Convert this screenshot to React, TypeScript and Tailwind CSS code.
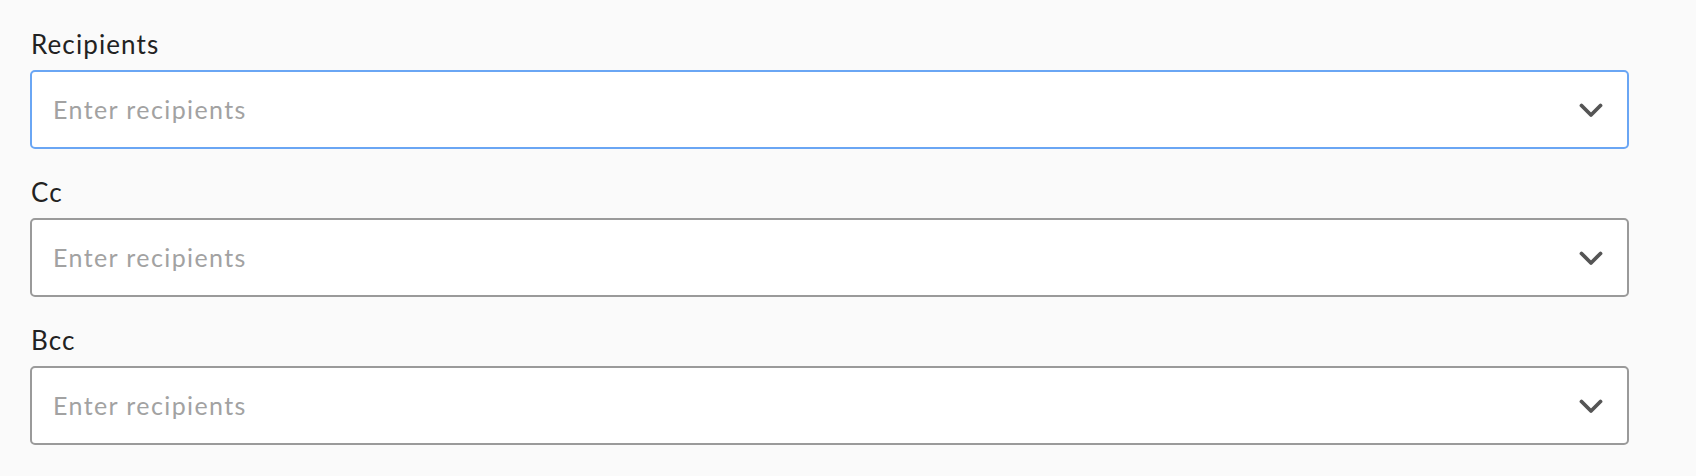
import React from 'react';

function Chevron() {
  return (
    <svg width="24" height="16" viewBox="0 0 24 16" fill="none">
      <path d="M2.5 3.5l9.5 9.5 9.5-9.5" stroke="#555555" strokeWidth="3.8" strokeLinecap="round" strokeLinejoin="round" />
    </svg>
  );
}

function Field({ label, focused }: { label: string; focused?: boolean }) {
  return (
    <div className="flex flex-col">
      <label className="h-[34px] leading-[34px] mb-[9px] text-[26px] tracking-[1.1px] text-[#222222] pl-[1px]">{label}</label>
      <div
        className={
          'h-[79px] w-[1599px] flex items-center justify-between bg-white rounded-[5px] border-2 pl-[21px] pr-[24px] ' +
          (focused ? 'border-[#6aa6f4]' : 'border-[#9a9a9a]')
        }
      >
        <input
          className="flex-1 bg-transparent outline-none text-[25px] tracking-[1.4px] text-[#222] placeholder:text-[#a2a2a2]"
          placeholder="Enter recipients"
          style={{ fontFamily: 'inherit' }}
        />
        <Chevron />
      </div>
    </div>
  );
}

export default function App() {
  return (
    <div
      className="w-[1696px] h-[476px] bg-[#fafafa] pl-[30px] pt-[27px] flex flex-col gap-[26px]"
      style={{ fontFamily: 'Lato, "Noto Sans", sans-serif' }}
    >
      <Field label="Recipients" focused />
      <Field label="Cc" />
      <Field label="Bcc" />
    </div>
  );
}
